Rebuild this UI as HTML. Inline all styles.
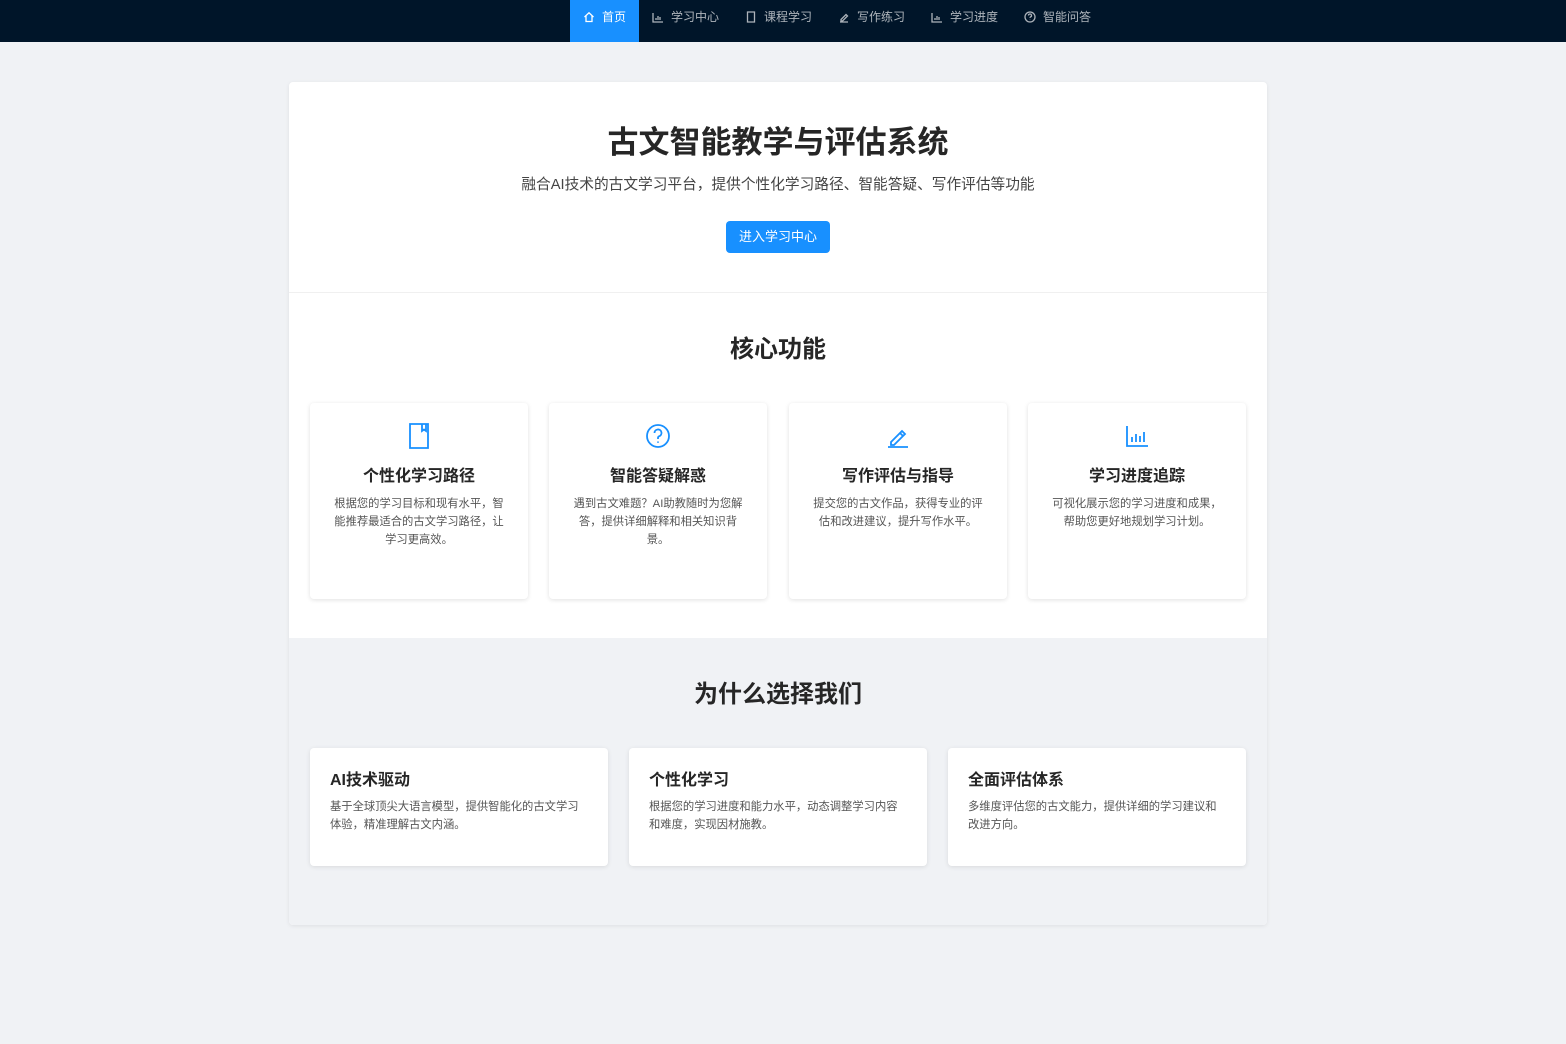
<!DOCTYPE html><html><head><meta charset="utf-8"><style>
*{margin:0;padding:0;box-sizing:border-box}
body{width:1566px;height:1044px;background:#f0f2f5;font-family:"Liberation Sans","Noto Sans CJK SC",sans-serif;color:#262626;overflow:hidden}
.nav{height:42px;background:#001529;display:flex;justify-content:center;padding-left:108px}
.nav a{display:flex;align-items:flex-start;padding-top:9px;gap:7px;color:rgba(255,255,255,.68);font-size:12px;padding-left:13px;padding-right:13px;height:42px;text-decoration:none;line-height:16px}
.nav a.on{background:#1890ff;color:#fff}
.nav svg{width:12px;height:12px;margin-top:2px;fill:none;stroke:currentColor;stroke-width:1.3}
.box{position:absolute;left:289px;top:82px;width:978px;height:843px;background:#fff;border-radius:4px;box-shadow:0 1px 4px rgba(0,0,0,.08);overflow:hidden}
h1{position:absolute;top:35px;width:100%;text-align:center;font-size:31px;font-weight:bold;color:#262626}
.sub{position:absolute;top:91px;width:100%;text-align:center;font-size:14.7px;color:#444}
.btn{position:absolute;left:437px;top:139px;width:104px;height:32px;background:#1890ff;color:#fff;font-size:13px;border-radius:4px;text-align:center;line-height:32px}
.hr{position:absolute;top:210px;left:0;width:100%;border-top:1px solid #f0f0f0}
h2{position:absolute;width:100%;text-align:center;font-size:24px;font-weight:bold}
.c{position:absolute;top:321px;width:218px;height:196px;background:#fff;border-radius:4px;box-shadow:0 1px 5px rgba(0,0,0,.12);text-align:center}
.c svg{position:absolute;left:97px;top:20px;width:24px;height:26px;fill:none;stroke:#1890ff;stroke-width:1.8}
.c h3{position:absolute;top:59px;width:100%;font-size:16px;font-weight:bold}
.c p{position:absolute;top:92px;left:20px;right:20px;font-size:11.3px;line-height:18px;color:#555}
.gray{position:absolute;top:556px;left:0;width:100%;height:287px;background:#f0f2f5}
.w{position:absolute;top:110px;width:298px;height:118px;background:#fff;border-radius:4px;box-shadow:0 1px 5px rgba(0,0,0,.1);padding:18px 20px 20px 20px}
.w h3{font-size:16px;font-weight:bold;margin-bottom:8px}
.w p{font-size:11.3px;line-height:18px;color:#555;padding-right:8px}
</style></head><body>
<div class="nav">
<a class="on"><svg viewBox="0 0 12 12"><path d="M1.5 6L6 1.8 10.5 6M3 5v5.5h6V5"/></svg>首页</a>
<a><svg viewBox="0 0 12 12"><path d="M1 2v9h10M4 9V7M6 9V5M8 9V6"/></svg>学习中心</a>
<a><svg viewBox="0 0 12 12"><path d="M2.5 1h7v10h-7z"/></svg>课程学习</a>
<a><svg viewBox="0 0 12 12"><path d="M2 11h8M3 8.5l5-5 1.5 1.5-5 5H3z"/></svg>写作练习</a>
<a><svg viewBox="0 0 12 12"><path d="M1 2v9h10M4 9V7M6 9V5M8 9V6"/></svg>学习进度</a>
<a><svg viewBox="0 0 12 12"><circle cx="6" cy="6" r="5"/><path d="M4.5 4.5a1.5 1.5 0 1 1 2 1.4c-.4.2-.5.5-.5 1M6 8.5v.3"/></svg>智能问答</a>
</div>
<div class="box">
<h1>古文智能教学与评估系统</h1>
<div class="sub">融合AI技术的古文学习平台，提供个性化学习路径、智能答疑、写作评估等功能</div>
<div class="btn">进入学习中心</div>
<div class="hr"></div>
<h2 style="top:247px">核心功能</h2>
<div class="c" style="left:21px"><svg viewBox="0 0 24 26"><path d="M3 1h18v24H3zM15 1v7l2-1.5 2 1.5V1"/></svg><h3>个性化学习路径</h3><p>根据您的学习目标和现有水平，智能推荐最适合的古文学习路径，让学习更高效。</p></div>
<div class="c" style="left:260px"><svg viewBox="0 0 24 26"><circle cx="12" cy="13" r="11"/><path d="M8.5 10a3.5 3.5 0 1 1 4.5 3.3c-.7.3-1 .8-1 1.7v1M12 18.5v1.2"/></svg><h3>智能答疑解惑</h3><p>遇到古文难题？AI助教随时为您解答，提供详细解释和相关知识背景。</p></div>
<div class="c" style="left:500px"><svg viewBox="0 0 24 26"><path d="M2 24h20M5 19l11-11 3 3-11 11H5zM14 10l3 3"/></svg><h3>写作评估与指导</h3><p>提交您的古文作品，获得专业的评估和改进建议，提升写作水平。</p></div>
<div class="c" style="left:739px"><svg viewBox="0 0 24 26"><path d="M2 3v20h21M7 19v-5M11 19v-8M15 19v-6M19 19v-10"/></svg><h3>学习进度追踪</h3><p>可视化展示您的学习进度和成果，帮助您更好地规划学习计划。</p></div>
<div class="gray">
<h2 style="top:36px">为什么选择我们</h2>
<div class="w" style="left:21px"><h3>AI技术驱动</h3><p>基于全球顶尖大语言模型，提供智能化的古文学习体验，精准理解古文内涵。</p></div>
<div class="w" style="left:340px"><h3>个性化学习</h3><p>根据您的学习进度和能力水平，动态调整学习内容和难度，实现因材施教。</p></div>
<div class="w" style="left:659px"><h3>全面评估体系</h3><p>多维度评估您的古文能力，提供详细的学习建议和改进方向。</p></div>
</div>
</div>
</body></html>
